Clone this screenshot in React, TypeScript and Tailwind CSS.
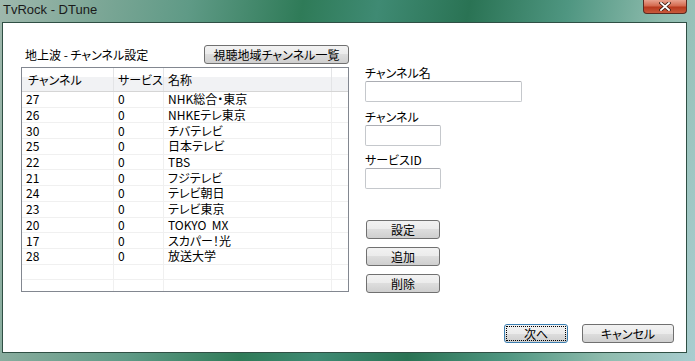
import React from 'react';

interface ChannelRow {
  ch: string;
  service: string;
  name: string;
}

const rows: ChannelRow[] = [
  { ch: '27', service: '0', name: 'NHK総合・東京' },
  { ch: '26', service: '0', name: 'NHKEテレ東京' },
  { ch: '30', service: '0', name: 'チバテレビ' },
  { ch: '25', service: '0', name: '日本テレビ' },
  { ch: '22', service: '0', name: 'TBS' },
  { ch: '21', service: '0', name: 'フジテレビ' },
  { ch: '24', service: '0', name: 'テレビ朝日' },
  { ch: '23', service: '0', name: 'テレビ東京' },
  { ch: '20', service: '0', name: 'TOKYO\u00a0\u00a0MX' },
  { ch: '17', service: '0', name: 'スカパー！光' },
  { ch: '28', service: '0', name: '放送大学' },
];

const VistaButton: React.FC<{ label: string; className?: string; focused?: boolean }> = ({
  label,
  className = '',
  focused = false,
}) => (
  <button
    className={`flex items-center justify-center whitespace-nowrap rounded-[3px] border text-[12px] leading-none text-black ${
      focused ? 'border-[#3c7fb1] p-[2px]' : 'border-[#707070]'
    } bg-[linear-gradient(#f2f2f2_0%,#ebebeb_50%,#dddddd_50%,#cfcfcf_100%)] ${className}`}
  >
    <span
      className={`flex h-full w-full items-center justify-center ${
        focused ? 'outline-1 outline-dotted outline-black' : ''
      }`}
    >
      {label}
    </span>
  </button>
);

const TextInput: React.FC<{ className?: string }> = ({ className = '' }) => (
  <div className={`h-[21px] rounded-[2px] border border-[#c5c8cc] border-t-[#abadb3] bg-white ${className}`} />
);

const App: React.FC = () => {
  return (
    <div
      className="flex h-[361px] w-[695px] flex-col overflow-hidden bg-[linear-gradient(100deg,#9fb8ad_0%,#7fa898_12%,#5f9a86_25%,#2f7b58_40%,#3f8a73_50%,#2a7354_62%,#4f9681_75%,#8fbcae_88%,#a9cdd0_100%)] text-black [font-feature-settings:'palt']"
      style={{ fontFamily: '"Noto Sans CJK JP", "Liberation Sans", sans-serif' }}
    >
      {/* title bar */}
      <div className="relative flex h-[22px] shrink-0 items-start">
        <span
          className="pl-[3px] pt-[2px] text-[13px] leading-[16px] text-[#1a1a1a]"
          style={{ fontFamily: '"Liberation Sans", "Noto Sans CJK JP", sans-serif' }}
        >
          TvRock - DTune
        </span>
        <div className="absolute right-[8px] top-0 flex h-[14px] w-[44px] items-center justify-center rounded-b-[4px] border border-t-0 border-[#5a2a20] bg-[linear-gradient(#e8a28f_0%,#d46a4f_45%,#b8391d_55%,#c85a3c_100%)]">
          <svg width="12" height="9" viewBox="0 0 12 9">
            <path d="M2 1 L10 8 M10 1 L2 8" stroke="#3a1a10" strokeWidth="3.4" strokeLinecap="square" />
            <path d="M2 1 L10 8 M10 1 L2 8" stroke="#ffffff" strokeWidth="1.8" strokeLinecap="square" />
          </svg>
        </div>
      </div>

      <div className="flex min-h-0 flex-1">
        <div className="w-[2px] shrink-0" />
        {/* client area */}
        <div className="flex w-[685px] flex-col border border-[#2f4f44] bg-white text-[12px]">
          <div className="flex pl-[18px] pt-[22px]">
            {/* left column */}
            <div className="flex w-[328px] flex-col">
              <div className="flex h-[19px] items-center justify-between">
                <span className="whitespace-nowrap pl-[4px] leading-none">地上波 - チャンネル設定</span>
                <VistaButton label="視聴地域チャンネル一覧" className="h-[19px] w-[145px]" />
              </div>
              <div className="mt-[3px] h-[225px] overflow-hidden border border-[#828790] bg-white">
                <div className="flex h-[24px] whitespace-nowrap border-b border-[#d5d5d5] bg-[linear-gradient(#ffffff_0%,#ffffff_40%,#f1f2f4_41%,#f1f2f4_100%)]">
                  <div className="flex w-[92px] items-center border-r border-[#e3e4e6] pl-[6px]">チャンネル</div>
                  <div className="flex w-[50px] items-center border-r border-[#e3e4e6] pl-[4px]">サービス</div>
                  <div className="flex w-[168px] items-center border-r border-[#e3e4e6] pl-[4px]">名称</div>
                  <div className="flex-1" />
                </div>
                {[...rows, { ch: '', service: '', name: '' }, { ch: '', service: '', name: '' }].map((r, i) => (
                  <div key={i} className="flex h-[15.7px] whitespace-nowrap border-b border-[#f0f0f0] leading-none">
                    <div className="flex w-[92px] items-center border-r border-[#f0f0f0] pl-[4px]">{r.ch}</div>
                    <div className="flex w-[50px] items-center border-r border-[#f0f0f0] pl-[4px]">{r.service}</div>
                    <div className="flex w-[168px] items-center border-r border-[#f0f0f0] pl-[4px]">{r.name}</div>
                    <div className="flex-1" />
                  </div>
                ))}
              </div>
            </div>

            {/* right column */}
            <div className="ml-[16px] flex flex-col pt-[21px]">
              <span className="h-[15px] whitespace-nowrap leading-[14px]">チャンネル名</span>
              <TextInput className="w-[157px]" />
              <span className="mt-[8px] h-[15px] whitespace-nowrap leading-[14px]">チャンネル</span>
              <TextInput className="w-[76px]" />
              <span className="mt-[7px] h-[15px] whitespace-nowrap leading-[14px]">サービスID</span>
              <TextInput className="w-[76px]" />
              <div className="mt-[31px] flex flex-col gap-[8px] pl-[1px]">
                <VistaButton label="設定" className="h-[19px] w-[74px]" />
                <VistaButton label="追加" className="h-[19px] w-[74px]" />
                <VistaButton label="削除" className="h-[19px] w-[74px]" />
              </div>
            </div>
          </div>

          <div className="mt-auto flex justify-end gap-[14px] pb-[9px] pr-[12px]">
            <VistaButton label="次へ" focused className="h-[19px] w-[64px]" />
            <VistaButton label="キャンセル" className="h-[19px] w-[92px]" />
          </div>
        </div>
        <div className="flex-1" />
      </div>
      <div className="h-[8px] shrink-0" />
    </div>
  );
};

export default App;
